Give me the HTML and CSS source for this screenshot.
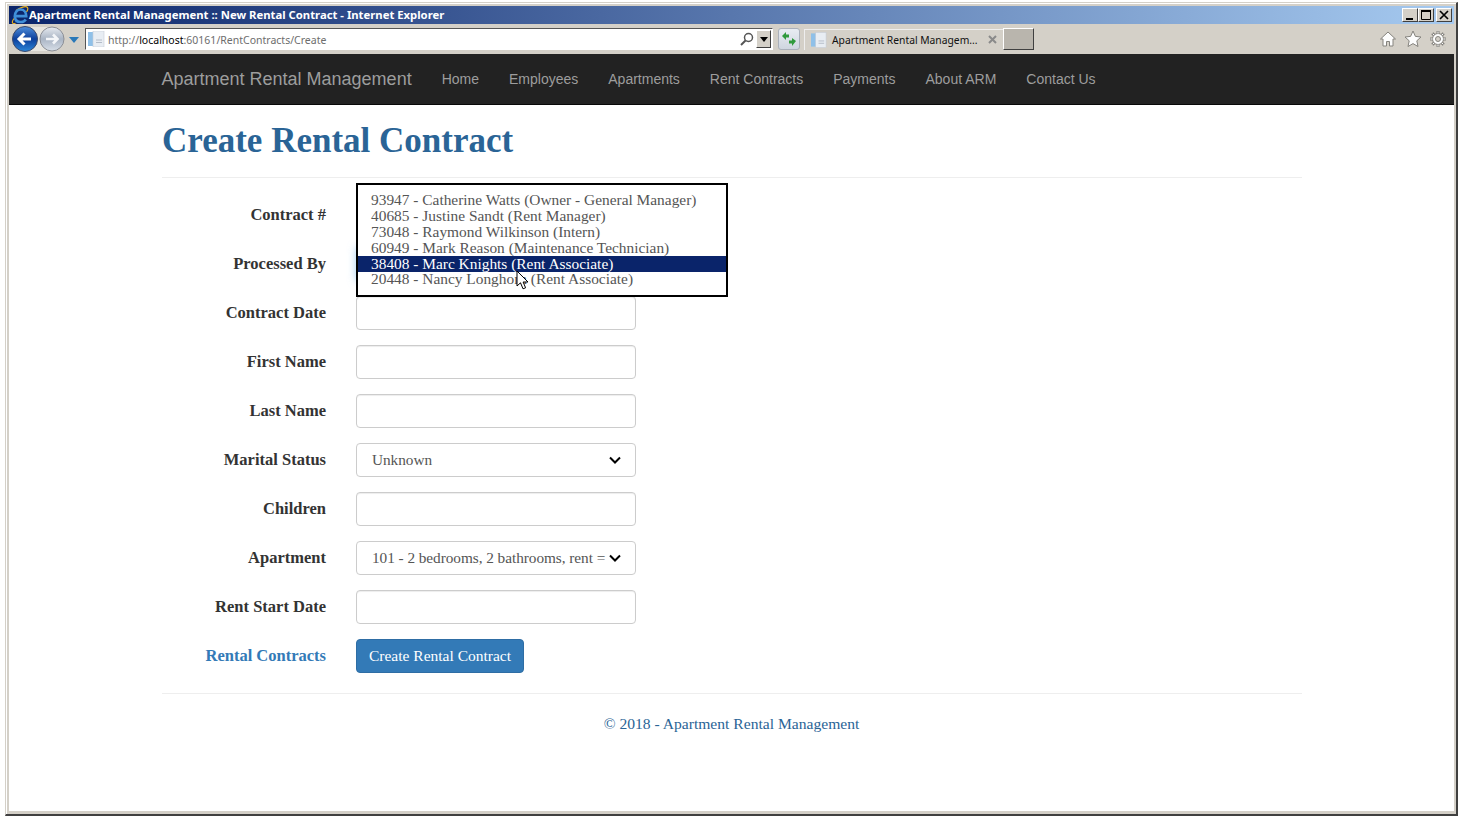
FILE: index.html
```html
<!DOCTYPE html>
<html lang="en">
<head>
<meta charset="utf-8">
<title>Apartment Rental Management :: New Rental Contract - Internet Explorer</title>
<link rel="stylesheet" href="styles.css">
</head>
<body>
<div class="window">
  <div class="titlebar">
    <svg class="ie-logo" width="18" height="18" viewBox="0 0 18 18"><path d="M5 4.500C9 1.200 15-.3 16.500 1.500c.8 1.200 0 3-1 4.500M3 12.500C.3 16 1 18.300 4.500 17.300" fill="none" stroke="#e8b020" stroke-width="1.200"/><path d="M5 10.200h10.200c0-4-2.500-6.700-5.700-6.700S3.800 6.400 3.800 10.500 6.500 16 10 16c2.200 0 3.800-1 4.800-2.500" fill="none" stroke="#3f8fd8" stroke-width="2.700"/></svg>
    <span class="title-text">Apartment Rental Management :: New Rental Contract - Internet Explorer</span>
    <div class="win-btns">
      <span class="win-btn"><svg width="14" height="12" viewBox="0 0 14 12"><rect x="3" y="9" width="7" height="2" fill="#000"/></svg></span>
      <span class="win-btn"><svg width="14" height="12" viewBox="0 0 14 12"><path d="M2.500 2.500h9v8h-9z" fill="none" stroke="#000"/><rect x="2" y="1" width="10" height="2" fill="#000"/></svg></span>
      <span class="win-btn win-close"><svg width="14" height="12" viewBox="0 0 14 12"><path d="M3 2l8 8M11 2l-8 8" stroke="#000" stroke-width="1.700"/></svg></span>
    </div>
  </div>
  <div class="toolbar">
    <svg class="nav-btns" width="54" height="28" viewBox="0 0 54 28">
      <defs>
        <linearGradient id="bk" x1="0" y1="0" x2="0" y2="1"><stop offset="0" stop-color="#4f8fdc"/><stop offset=".5" stop-color="#0c3f9c"/><stop offset="1" stop-color="#2b86d8"/></linearGradient>
        <linearGradient id="fw" x1="0" y1="0" x2="0" y2="1"><stop offset="0" stop-color="#e6eaf0"/><stop offset=".5" stop-color="#a9b4c4"/><stop offset="1" stop-color="#d8dfe8"/></linearGradient>
      </defs>
      <path d="M14 2h26v24H14z" fill="#e8e6e0"/>
      <circle cx="40" cy="14" r="12" fill="url(#fw)" stroke="#8c8f96"/>
      <path d="M34 14h11M41 9.500l4.500 4.500-4.500 4.500" fill="none" stroke="#f4f6f9" stroke-width="2.600"/>
      <circle cx="13" cy="14" r="12.500" fill="url(#bk)" stroke="#39486a"/>
      <path d="M19 14H7.500M12.500 8.500L7 14l5.500 5.500" fill="none" stroke="#fff" stroke-width="3"/>
    </svg>
    <svg class="drop-arrow" width="10" height="6" viewBox="0 0 10 6"><path d="M0 0h10L5 6z" fill="#2a78b8"/></svg>
    <div class="address">
      <svg class="page-icon" width="17" height="16" viewBox="0 0 17 16"><rect x="0" y="1" width="6" height="14" fill="#8fc0e8"/><rect x="5" y="0" width="11" height="16" fill="#e8edf3" stroke="#c5ccd6" stroke-width=".6"/><path d="M8 9h6M8 11.500h6" stroke="#b4bcc8"/></svg>
      <span class="url">http://<b>localhost</b>:60161/RentContracts/Create</span>
      <svg class="search" width="14" height="14" viewBox="0 0 14 14"><circle cx="8.500" cy="5.500" r="4" fill="none" stroke="#555" stroke-width="1.500"/><path d="M5.500 8.500L1 13" stroke="#555" stroke-width="2"/></svg>
      <span class="addr-drop"><svg width="8" height="5" viewBox="0 0 8 5"><path d="M0 0h8L4 5z" fill="#000"/></svg></span>
    </div>
    <span class="refresh"><svg width="16" height="16" viewBox="0 0 16 16"><path d="M1 5l4-4v2.500h3V6.500H5V9zM15 10l-4 5v-2.500H8V9.500h3V7z" fill="#2f9a3c"/></svg></span>
    <div class="tab">
      <svg width="16" height="16" viewBox="0 0 17 16"><rect x="0" y="1" width="6" height="14" fill="#8fc0e8"/><rect x="5" y="0" width="11" height="16" fill="#e8edf3" stroke="#c5ccd6" stroke-width=".6"/><path d="M8 9h6M8 11.500h6" stroke="#b4bcc8"/></svg>
      <span class="tab-title">Apartment Rental Managem...</span>
      <svg class="tab-x" width="9" height="9" viewBox="0 0 9 9"><path d="M1 1l7 7M8 1L1 8" stroke="#8a8a8a" stroke-width="2"/></svg>
    </div>
    <span class="new-tab"></span>
    <div class="tools">
      <svg width="18" height="18" viewBox="0 0 18 18"><path d="M9 2L1.500 9H4v7h3.500v-4.500h3V16H14V9h2.500z" fill="#fdfdfd" stroke="#85837e"/></svg>
      <svg width="18" height="18" viewBox="0 0 18 18"><path d="M9 1l2.400 5.400 5.600.6-4.200 3.800 1.200 5.700L9 13.600 4 16.500l1.200-5.700L1 7l5.600-.6z" fill="#fdfdfd" stroke="#85837e"/></svg>
      <svg width="18" height="18" viewBox="0 0 18 18"><path d="M9 1v3M9 14v3M1 9h3M14 9h3M3.300 3.300l2.100 2.100M12.600 12.600l2.100 2.100M14.700 3.300l-2.100 2.100M5.400 12.600l-2.100 2.100" stroke="#85837e" stroke-width="3"/><circle cx="9" cy="9" r="5.500" fill="#fdfdfd" stroke="#85837e"/><path d="M9 1.500v2M9 14.500v2M1.500 9h2M14.500 9h2M3.700 3.700l1.400 1.400M12.900 12.900l1.400 1.400M14.300 3.700l-1.400 1.400M5.100 12.900l-1.400 1.400" stroke="#fff"/><circle cx="9" cy="9" r="2.500" fill="#d4d0c8" stroke="#85837e"/></svg>
    </div>
  </div>
  <div class="viewport">
    <nav class="navbar">
      <div class="nav-inner">
        <a class="brand">Apartment Rental Management</a>
        <a class="nav-link">Home</a>
        <a class="nav-link">Employees</a>
        <a class="nav-link">Apartments</a>
        <a class="nav-link">Rent Contracts</a>
        <a class="nav-link">Payments</a>
        <a class="nav-link">About ARM</a>
        <a class="nav-link">Contact Us</a>
      </div>
    </nav>
    <main class="content">
      <h1 class="page-title">Create Rental Contract</h1>
      <hr class="rule rule-top">
      <form class="form">
        <div class="row"><label class="lbl">Contract #</label><div class="ctl"></div></div>
        <div class="row"><label class="lbl">Processed By</label><div class="ctl focus"></div></div>
        <div class="row"><label class="lbl">Contract Date</label><div class="ctl"></div></div>
        <div class="row"><label class="lbl">First Name</label><div class="ctl"></div></div>
        <div class="row"><label class="lbl">Last Name</label><div class="ctl"></div></div>
        <div class="row"><label class="lbl">Marital Status</label><div class="ctl select"><span class="sel-text">Unknown</span><svg class="chev" width="12" height="8" viewBox="0 0 12 8"><path d="M1 1.500l5 5 5-5" fill="none" stroke="#000" stroke-width="2"/></svg></div></div>
        <div class="row"><label class="lbl">Children</label><div class="ctl"></div></div>
        <div class="row"><label class="lbl">Apartment</label><div class="ctl select"><span class="sel-text">101 - 2 bedrooms, 2 bathrooms, rent =</span><svg class="chev" width="12" height="8" viewBox="0 0 12 8"><path d="M1 1.500l5 5 5-5" fill="none" stroke="#000" stroke-width="2"/></svg></div></div>
        <div class="row"><label class="lbl">Rent Start Date</label><div class="ctl"></div></div>
        <div class="row"><label class="lbl"><a class="back">Rental Contracts</a></label><button class="btn" type="button">Create Rental Contract</button></div>
        <div class="popup">
          <div class="opt">93947 - Catherine Watts (Owner - General Manager)</div>
          <div class="opt">40685 - Justine Sandt (Rent Manager)</div>
          <div class="opt">73048 - Raymond Wilkinson (Intern)</div>
          <div class="opt">60949 - Mark Reason (Maintenance Technician)</div>
          <div class="opt opt-sel">38408 - Marc Knights (Rent Associate)</div>
          <div class="opt opt-last">20448 - Nancy Longhorn (Rent Associate)</div>
        </div>
        <svg class="cursor" width="13" height="20" viewBox="0 0 13 20"><path d="M1 1v15l3.500-3.200 2.500 6 2.600-1-2.500-5.800H12z" fill="#fff" stroke="#000"/></svg>
      </form>
      <hr class="rule rule-bottom">
      <footer class="foot">© 2018 - Apartment Rental Management</footer>
    </main>
  </div>
</div>
</body>
</html>
```
FILE: styles.css
```css
* { box-sizing: border-box; }
html, body { margin: 0; height: 100%; background: #fff; overflow: hidden; }
body { padding: 2px 4px 3px 5px; font-family: "Liberation Serif", serif; }
a { text-decoration: none; }

.window {
  height: 814px;
  display: flex;
  flex-direction: column;
  background: #d4d0c8;
  border-style: solid;
  border-width: 1px 2px 2px 1px;
  border-color: #d4d0c8 #404040 #404040 #d4d0c8;
  padding: 3px 2px 3px 3px;
  box-shadow: inset 1px 1px 0 #fff;
}

.titlebar {
  height: 18px;
  flex: none;
  display: flex;
  align-items: center;
  background: linear-gradient(90deg, #0a246a, #a6caf0);
  padding-left: 2px;
  color: #fff;
}
.ie-logo { flex: none; }
.title-text { margin: 0 0 2px; font: bold 11.300px "Noto Sans", sans-serif; white-space: nowrap; }
.win-btns { margin-left: auto; margin-right: 2px; display: flex; }
.win-btn { width: 16px; height: 14px; background: #d4d0c8; border: 1px solid; border-color: #fff #404040 #404040 #fff; display: flex; align-items: center; justify-content: center; }
.win-btn svg { flex: none; }
.win-close { margin-left: 2px; }

.toolbar {
  height: 30px;
  flex: none;
  display: flex;
  align-items: center;
  background: #d4d0c8;
  padding-left: 3px;
}
.nav-btns { flex: none; }
.drop-arrow { flex: none; margin: 2px 0 0 3px; }
.address {
  flex: none;
  width: 688px;
  height: 22px;
  margin-left: 6px;
  display: flex;
  align-items: center;
  background: #fff;
  border: 1px solid;
  border-color: #555 #fff #fff #555;
  padding-left: 2px;
}
.page-icon { flex: none; }
.url { margin: 1px 0 0 3px; font: 10.500px "Noto Sans", sans-serif; color: #6d6d6d; white-space: nowrap; }
.url b { font-weight: 400; color: #000; }
.search { margin-left: auto; flex: none; }
.addr-drop { margin: 0 1px 0 2px; width: 15px; height: 18px; background: #d4d0c8; border: 1px solid; border-color: #fff #404040 #404040 #fff; display: flex; align-items: center; justify-content: center; }
.refresh { flex: none; width: 22px; height: 22px; margin-left: 5px; background: linear-gradient(#e8ecf2, #cfd6e0); border: 1px solid #aab0ba; border-radius: 3px; display: flex; align-items: center; justify-content: center; }
.tab { flex: none; width: 199px; height: 21px; margin-left: 4px; display: flex; align-items: center; border-top: 1px solid #eee; border-left: 1px solid #eee; padding-left: 6px; }
.tab-title { margin-left: 5px; font: 10.300px "Noto Sans", sans-serif; color: #111; white-space: nowrap; }
.tab-x { margin-left: 10px; flex: none; }
.new-tab { flex: none; width: 31px; height: 22px; background: #b9b5ad; border: 1px solid; border-color: #fff #404040 #404040 #fff; margin-left: 0; }
.tools { margin-left: auto; margin-right: 7px; display: flex; gap: 7px; }

.viewport { flex: 1; min-height: 0; background: #fff; display: flex; flex-direction: column; }

.navbar { height: 51px; flex: none; background: #222; border-bottom: 1px solid #080808; }
.nav-inner { margin-left: 152.500px; display: flex; align-items: center; height: 50px; }
.brand { font: 18px "Liberation Sans", sans-serif; color: #9d9d9d; margin-right: 15px; }
.nav-link { font: 14px "Liberation Sans", sans-serif; color: #9d9d9d; padding: 0 15px; }

.content { margin-left: 153px; width: 1140px; }
.page-title { margin: 0; height: 72px; padding-top: 16px; font-size: 35px; font-weight: bold; line-height: 40px; color: #2a6496; }
.rule { margin: 0; border: 0; border-top: 1px solid #eee; }
.form { position: relative; padding-top: 20px; display: flex; flex-direction: column; gap: 15px; }
.row { display: flex; align-items: center; height: 34px; }
.lbl { width: 164px; text-align: right; font-size: 16.500px; font-weight: bold; color: #333; margin-right: 30px; white-space: nowrap; }
.ctl { width: 280px; height: 34px; border: 1px solid #ccc; border-radius: 4px; background: #fff; box-shadow: inset 0 1px 1px rgba(0,0,0,.075); }
.focus { border-color: #66afe9; box-shadow: 0 0 8px rgba(102,175,233,.6); }
.select { display: flex; align-items: center; padding: 0 14px 0 15px; box-shadow: none; font-size: 15.300px; color: #555; }
.sel-text { white-space: nowrap; letter-spacing: -.05px; }
.chev { margin-left: auto; flex: none; }
.btn { height: 34px; width: 168px; padding: 0; border: 1px solid #2e6da4; border-radius: 4px; background: #337ab7; color: #fff; font: 15.500px "Liberation Serif", serif; }
.back { color: #337ab7; }
.popup {
  position: absolute;
  left: 194px;
  top: 5px;
  width: 372px;
  height: 114px;
  background: #fff;
  border: 2px solid #000;
  padding-top: 7px;
  font-size: 15.400px;
  color: #555;
}
.opt { height: 16px; line-height: 16px; padding-left: 13px; white-space: nowrap; }
.opt-sel { background: #0a246a; color: #fff; }
.opt-last { height: 15px; line-height: 14px; }
.cursor { position: absolute; left: 354px; top: 92px; }
.rule-bottom { margin-top: 20px; }
.foot { padding-top: 20px; text-align: center; padding-right: 1px; font-size: 15.600px; line-height: 20px; color: #2a6496; }
```
